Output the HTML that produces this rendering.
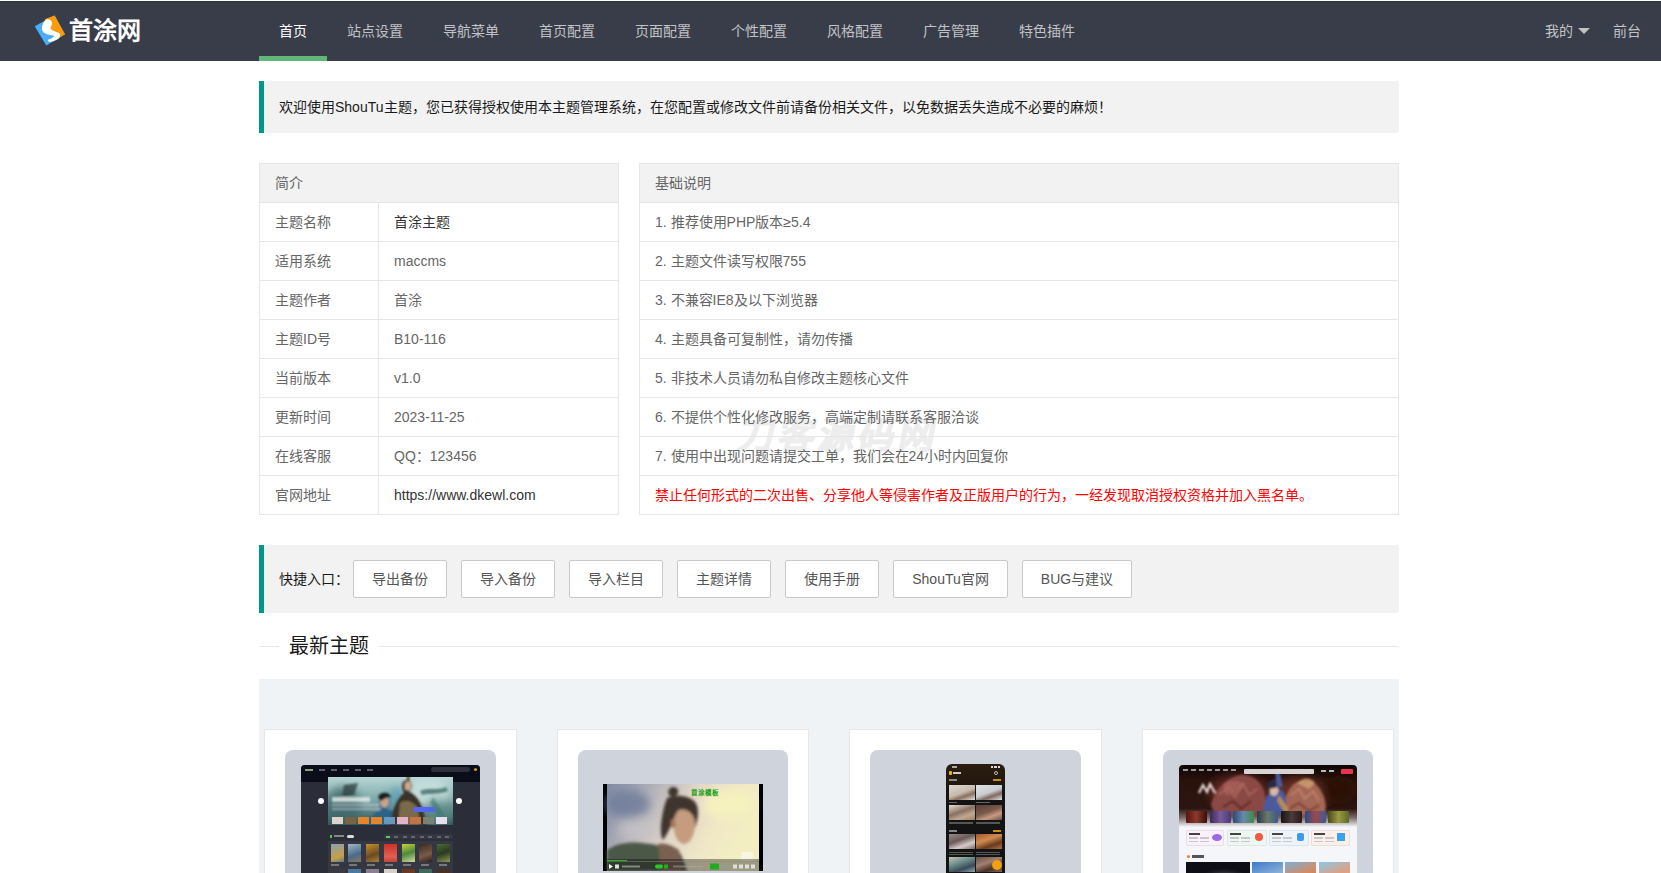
<!DOCTYPE html>
<html lang="zh-CN"><head><meta charset="utf-8">
<style>
*{box-sizing:border-box;margin:0;padding:0}
html,body{width:1661px;height:873px;overflow:hidden;background:#fff}
body{font-family:"Liberation Sans",sans-serif;font-size:14px;color:#000;position:relative}
.abs{position:absolute}
.header{position:absolute;left:0;top:1px;width:1661px;height:60px;background:#393D49;box-shadow:inset 0 1px 0 #2e313c}
.logo-t{position:absolute;left:69px;top:14px;font-family:"Liberation Serif",serif;font-weight:bold;font-size:24px;color:#fff;line-height:32px;letter-spacing:0}
.nav{position:absolute;top:0;left:259px;height:60px;white-space:nowrap}
.nav a{float:left;display:block;padding:0 20px;line-height:60px;color:rgba(255,255,255,.7);text-decoration:none;position:relative;font-size:14px}
.nav a.this{color:#fff}
.nav a.this:after{content:"";position:absolute;left:0;right:0;bottom:0;height:5px;background:#5FB878}
.rnav{position:absolute;top:0;line-height:60px;color:rgba(255,255,255,.7)}
.quote{position:absolute;left:259px;width:1140px;background:#f2f2f2;border-left:5px solid #009688;border-radius:0 2px 2px 0;padding:15px;line-height:22px;color:#1a1a1a}
table{position:absolute;border-collapse:collapse;border-spacing:0;color:#666;background:transparent}
td,th{border:1px solid #e6e6e6;padding:9px 15px;line-height:20px;height:39px;font-weight:normal;text-align:left;font-size:14px}
th{background:#f2f2f2}
.btn{display:inline-block;height:38px;line-height:36px;padding:0 18px;border:1px solid #C9C9C9;background:#fff;color:#555;border-radius:2px;font-size:14px;vertical-align:top;margin-left:10px}
.field{position:absolute;left:259px;top:646px;width:1140px;height:20px;border:1px solid #e6e6e6;border-width:1px 0 0;border-radius:2px}
.legend{position:absolute;left:20px;top:-15px;padding:0 10px;background:#fff;font-size:20px;font-weight:300;line-height:28px;color:#1a1a1a}
.gbox{position:absolute;left:259px;top:679px;width:1140px;height:200px;background:#f0f3f6}
.card{position:absolute;top:50px;width:253px;height:200px;background:#fff;border:1px solid #e6e6e6}
.ibox{position:absolute;left:20px;top:20px;width:211px;height:200px;background:#cfd4dc;border-radius:8px;overflow:hidden}
</style></head><body>
<div class="header">
  <svg class="abs" style="left:34px;top:14px" width="34" height="33" viewBox="0 0 34 33">
    <polygon points="20.6,0.4 31,19.2 12.3,30.4 0.7,11.3" fill="#4aadf5"/>
    <polygon points="20.6,0.4 31,19.2 21.5,24.9 22,21 17,14 13,5 10,4.5" fill="#ff9a0a"/>
    <path d="M12,4.5 C15,3.8 18,5 18,8 C18,10.5 16.5,12 16.5,13.5 C17.5,15.5 22,16.5 25,18 C26.5,19 26.5,22 24,24 C22,25.5 18,26.8 15,27 C14,26 14,25 14.5,24.5 C16.5,23.8 19,23 20.5,21 C19,20.3 16,20 13,19.2 C10,18.2 8,16.5 8,14 C7.8,11 9,7 12,4.5 Z" fill="#fff"/>
  </svg>
  <div class="logo-t">首涂网</div>
  <div class="nav">
    <a class="this">首页</a><a>站点设置</a><a>导航菜单</a><a>首页配置</a><a>页面配置</a><a>个性配置</a><a>风格配置</a><a>广告管理</a><a>特色插件</a>
  </div>
  <div class="rnav" style="left:1545px">我的</div>
  <svg class="abs" style="left:1578px;top:27px" width="12" height="7" viewBox="0 0 12 7"><polygon points="0,0 12,0 6,6" fill="#c2c2c2"/></svg>
  <div class="rnav" style="left:1613px">前台</div>
</div>

<div class="quote" style="top:81px;height:52px">欢迎使用ShouTu主题，您已获得授权使用本主题管理系统，在您配置或修改文件前请备份相关文件，以免数据丢失造成不必要的麻烦！</div>

<div class="abs" style="left:739px;top:414px;font-size:36px;line-height:44px;font-weight:900;color:#ededed;-webkit-text-stroke:1.2px #ededed;letter-spacing:4px;white-space:nowrap;transform:skewX(-11deg)">刀客源码网</div>
<table style="left:259px;top:163px;width:360px">
<tr><th colspan="2">简介</th></tr>
<tr><td style="width:119px">主题名称</td><td style="color:#333">首涂主题</td></tr>
<tr><td>适用系统</td><td>maccms</td></tr>
<tr><td>主题作者</td><td>首涂</td></tr>
<tr><td>主题ID号</td><td>B10-116</td></tr>
<tr><td>当前版本</td><td>v1.0</td></tr>
<tr><td>更新时间</td><td>2023-11-25</td></tr>
<tr><td>在线客服</td><td>QQ：123456</td></tr>
<tr><td>官网地址</td><td style="color:#333">https://www.dkewl.com</td></tr>
</table>

<table style="left:639px;top:163px;width:760px">
<tr><th>基础说明</th></tr>
<tr><td>1. 推荐使用PHP版本≥5.4</td></tr>
<tr><td>2. 主题文件读写权限755</td></tr>
<tr><td>3. 不兼容IE8及以下浏览器</td></tr>
<tr><td>4. 主题具备可复制性，请勿传播</td></tr>
<tr><td>5. 非技术人员请勿私自修改主题核心文件</td></tr>
<tr><td>6. 不提供个性化修改服务，高端定制请联系客服洽谈</td></tr>
<tr><td>7. 使用中出现问题请提交工单，我们会在24小时内回复你</td></tr>
<tr><td style="color:#f00">禁止任何形式的二次出售、分享他人等侵害作者及正版用户的行为，一经发现取消授权资格并加入黑名单。</td></tr>
</table>

<div class="quote" style="top:545px;height:68px;line-height:38px">快捷入口：<a class="btn" style="position:absolute;left:89px;top:15px;width:94px;padding:0;text-align:center;margin:0">导出备份</a><a class="btn" style="position:absolute;left:197px;top:15px;width:94px;padding:0;text-align:center;margin:0">导入备份</a><a class="btn" style="position:absolute;left:305px;top:15px;width:94px;padding:0;text-align:center;margin:0">导入栏目</a><a class="btn" style="position:absolute;left:413px;top:15px;width:94px;padding:0;text-align:center;margin:0">主题详情</a><a class="btn" style="position:absolute;left:521px;top:15px;width:94px;padding:0;text-align:center;margin:0">使用手册</a><a class="btn" style="position:absolute;left:629px;top:15px;width:115px;padding:0;text-align:center;margin:0">ShouTu官网</a><a class="btn" style="position:absolute;left:758px;top:15px;width:110px;padding:0;text-align:center;margin:0">BUG与建议</a></div>

<div class="field"><div class="legend">最新主题</div></div>

<div class="gbox">
  <div class="card" style="left:5px"><div class="ibox"></div></div>
  <div class="card" style="left:298px;width:252px"><div class="ibox" style="width:210px"></div></div>
  <div class="card" style="left:590px"><div class="ibox"></div></div>
  <div class="card" style="left:883px;width:252px"><div class="ibox" style="width:210px"></div></div>
</div>

<!-- thumb 1: dark desktop -->
<div class="abs" style="left:301px;top:765px;width:179px;height:120px;background:#2b2e39;border-radius:4px 4px 0 0;overflow:hidden">
  <div class="abs" style="left:0;top:0;width:179px;height:17px;background:#0b0d1b"></div>
  <div class="abs" style="left:4px;top:4px;width:8px;height:2px;background:#8fa080"></div>
  <div class="abs" style="left:18px;top:4px;width:60px;height:2px;background:repeating-linear-gradient(90deg,#5a5e6a 0 6px,transparent 6px 12px)"></div>
  <div class="abs" style="left:130px;top:2px;width:39px;height:5px;background:#2d303b;border-radius:3px"></div>
  <div class="abs" style="left:173px;top:3px;width:3px;height:3px;background:#c9a020;border-radius:50%"></div>
  <svg class="abs" style="left:27px;top:12px" width="125" height="48" viewBox="0 0 125 48">
    <defs>
      <filter id="bb1" x="-20%" y="-20%" width="140%" height="140%"><feGaussianBlur stdDeviation="1.2"/></filter>
      <filter id="bb2" x="-30%" y="-30%" width="160%" height="160%"><feGaussianBlur stdDeviation="4"/></filter>
      <linearGradient id="bg1" x1="0" y1="0" x2="0" y2="1"><stop offset="0" stop-color="#b9d6d6"/><stop offset=".5" stop-color="#7aa6a6"/><stop offset="1" stop-color="#2f5458"/></linearGradient>
    </defs>
    <rect width="125" height="48" fill="url(#bg1)"/>
    <g filter="url(#bb2)">
      <ellipse cx="15" cy="30" rx="18" ry="20" fill="#3d6668" opacity=".8"/>
      <ellipse cx="100" cy="15" rx="22" ry="14" fill="#c6e0de" opacity=".9"/>
      <ellipse cx="110" cy="35" rx="14" ry="14" fill="#5d8e8a" opacity=".7"/>
      <ellipse cx="70" cy="22" rx="12" ry="12" fill="#4f9ab8" opacity=".6"/>
    </g>
    <g filter="url(#bb1)">
      <path d="M16,8 L30,6 L26,18 L14,20 Z" fill="#2b3e3e" opacity=".75"/>
      <rect x="4" y="20" width="38" height="5" fill="#e8eeee" opacity=".8"/>
      <rect x="4" y="27" width="52" height="2" fill="#dde" opacity=".55"/>
      <rect x="4" y="31" width="48" height="2" fill="#dde" opacity=".5"/>
      <g transform="translate(0,7)"><path d="M52,14 C56,10 62,12 62,18 C62,22 60,24 58,25 C70,27 78,36 80,48 L34,48 C38,36 46,28 54,26 C51,23 50,18 52,14 Z" fill="#2a6488"/>
      <ellipse cx="56.5" cy="18" rx="4.5" ry="5.5" fill="#c8a48c"/>
      <path d="M50,13 C53,7 61,8 63,13 L58,14 L53,17 Z" fill="#1a1a1a"/></g>
      <path d="M76,4 C80,2 84,5 84,9 C84,12 82,14 81,15 C90,18 96,30 98,48 L62,48 C64,32 70,20 76,16 C74,12 73,7 76,4 Z" fill="#3a3228"/>
      <path d="M72,26 C78,22 86,24 90,32 L92,48 L70,48 Z" fill="#7a6a48"/>
      <ellipse cx="80" cy="9" rx="3.5" ry="4.5" fill="#caa88e"/>
      <rect x="79" y="-2" width="2.5" height="6" fill="#5a4020"/>
      <path d="M92,14 C100,10 110,14 118,10 L120,14 C110,18 100,16 94,18 Z" fill="#2d5a58" opacity=".7"/>
      <path d="M105,20 L118,40 L112,44 L102,26 Z" fill="#3a7070" opacity=".55"/>
    </g>
  </svg>
  <div class="abs" style="left:31px;top:52px;width:11px;height:7px;background:#ddd5cc"></div><div class="abs" style="left:44px;top:52px;width:11px;height:7px;background:#7a6244"></div><div class="abs" style="left:57px;top:52px;width:11px;height:7px;background:#e4852c"></div><div class="abs" style="left:70px;top:52px;width:11px;height:7px;background:#e4852c"></div><div class="abs" style="left:83px;top:52px;width:11px;height:7px;background:#6a98bc"></div><div class="abs" style="left:96px;top:52px;width:11px;height:7px;background:#e2b4cc"></div><div class="abs" style="left:109px;top:52px;width:11px;height:7px;background:#c27446"></div><div class="abs" style="left:122px;top:52px;width:11px;height:7px;background:#7c8270"></div><div class="abs" style="left:135px;top:52px;width:11px;height:7px;background:#e6dff0"></div>
  <div class="abs" style="left:112px;top:42px;width:22px;height:5px;background:#5566ee;border-radius:3px"></div>
  <div class="abs" style="left:17px;top:33px;width:6px;height:6px;background:#fff;border-radius:50%"></div>
  <div class="abs" style="left:155px;top:33px;width:6px;height:6px;background:#fff;border-radius:50%"></div>
  <div class="abs" style="left:29px;top:70px;width:2px;height:3px;background:#4c4"></div>
  <div class="abs" style="left:33px;top:70px;width:10px;height:2px;background:#888"></div>
  <div class="abs" style="left:46px;top:70px;width:7px;height:3px;background:#ddd;border-radius:2px"></div>
  <div class="abs" style="left:83px;top:69px;width:69px;height:5px;background:#343743;border-radius:2px"></div><div class="abs" style="left:85px;top:71px;width:4px;height:1.5px;background:#5c5"></div><div class="abs" style="left:93px;top:71px;width:57px;height:1.5px;background:repeating-linear-gradient(90deg,#666 0 4px,transparent 4px 8.5px)"></div><div class="abs" style="left:27px;top:76px;width:125px;height:50px;background:#353843"></div>
  <div class="abs" style="left:30px;top:79px;width:13px;height:18px;background:linear-gradient(160deg,#8aa0b8,#c8a040 70%,#5a7a9a)"></div>
  <div class="abs" style="left:47px;top:79px;width:13px;height:18px;background:linear-gradient(160deg,#a0b8c8,#4a6a8a 60%,#8a7a5a)"></div>
  <div class="abs" style="left:65px;top:79px;width:13px;height:18px;background:linear-gradient(160deg,#c89030,#6a4a20 60%,#b08040)"></div>
  <div class="abs" style="left:83px;top:79px;width:13px;height:18px;background:linear-gradient(180deg,#d03028,#e06050 70%,#c84030)"></div>
  <div class="abs" style="left:101px;top:79px;width:13px;height:18px;background:linear-gradient(160deg,#d0d040,#4a8a3a 50%,#d8d8a0)"></div>
  <div class="abs" style="left:118px;top:79px;width:13px;height:18px;background:linear-gradient(160deg,#3a2a20,#7a5a48 60%,#2a2018)"></div>
  <div class="abs" style="left:136px;top:79px;width:13px;height:18px;background:linear-gradient(160deg,#4a6a3a,#2a3a20 50%,#8a9a50)"></div>
  <div class="abs" style="left:30px;top:99px;width:120px;height:2px;background:repeating-linear-gradient(90deg,#777 0 8px,transparent 8px 18px)"></div>
  <div class="abs" style="left:30px;top:104px;width:13px;height:12px;background:#3a3a40"></div><div class="abs" style="left:47px;top:104px;width:13px;height:12px;background:#4a7aa0"></div><div class="abs" style="left:65px;top:104px;width:13px;height:12px;background:#8a8090"></div><div class="abs" style="left:83px;top:104px;width:13px;height:12px;background:#d8d0c8"></div><div class="abs" style="left:101px;top:104px;width:13px;height:12px;background:#6a3a20"></div><div class="abs" style="left:118px;top:104px;width:13px;height:12px;background:#3a6a5a"></div><div class="abs" style="left:136px;top:104px;width:13px;height:12px;background:#4a3020"></div>
</div>

<!-- thumb 2: video -->
<svg class="abs" style="left:603px;top:784px" width="160" height="87" viewBox="0 0 160 87">
  <defs>
    <filter id="bl1" x="-20%" y="-20%" width="140%" height="140%"><feGaussianBlur stdDeviation="1.6"/></filter>
    <filter id="bl2" x="-30%" y="-30%" width="160%" height="160%"><feGaussianBlur stdDeviation="5"/></filter>
    <linearGradient id="sky" x1="0" y1="0" x2="1" y2="0.3">
      <stop offset="0" stop-color="#7f8aa3"/><stop offset="0.3" stop-color="#b4b3bb"/><stop offset="0.55" stop-color="#e2d6c8"/><stop offset="0.8" stop-color="#f1e8c6"/><stop offset="1" stop-color="#f2eec2"/>
    </linearGradient>
  </defs>
  <rect width="160" height="87" fill="#000"/>
  <rect x="4" y="0" width="152" height="87" fill="url(#sky)"/>
  <g filter="url(#bl2)">
    <ellipse cx="25" cy="20" rx="22" ry="14" fill="#6d7a98" opacity=".8"/>
    <ellipse cx="35" cy="45" rx="20" ry="10" fill="#c8c4c8" opacity=".7"/>
    <ellipse cx="125" cy="20" rx="25" ry="15" fill="#f6f2bc" opacity=".9"/>
  </g>
  <g filter="url(#bl1)">
    <path d="M4,66 C15,58 30,57 48,60 C60,62 70,66 78,70 L84,87 L4,87 Z" fill="#4b5946"/>
    <path d="M55,60 C62,58 70,62 76,66 L80,87 L58,87 Z" fill="#7a6050"/>
    <path d="M70,3 C66,3 64,8 66,11 C68,13 74,13 75,9 C76,5 73,3 70,3 Z" fill="#3e342c"/>
    <path d="M64,14 C72,10 86,11 92,18 C97,24 95,36 92,44 L86,40 C84,32 80,28 74,30 C70,36 66,48 60,56 C56,50 58,30 64,14 Z" fill="#3f352e"/>
    <path d="M76,26 C84,24 92,30 92,40 C92,50 88,58 82,60 C76,60 72,54 71,46 C70,38 71,30 76,26 Z" fill="#c59c7e"/>
    <path d="M68,36 C70,34 73,36 73,40 C73,44 70,45 68,43 Z" fill="#a57a5e"/>
  </g>
  <text x="88" y="11" font-size="6.5" font-weight="bold" fill="#12a012" font-family="Liberation Sans">首涂模板</text>
  <rect x="138" y="68" width="12" height="9" rx="2" fill="#fff" opacity=".45"/>
  <rect x="4" y="75" width="152" height="12" fill="#000" opacity=".35"/>
  <rect x="4" y="76" width="20" height="1" fill="#2b2"/>
  <rect x="4" y="77" width="152" height="0.8" fill="#888" opacity=".6"/>
  <polygon points="6,80 10,82.5 6,85" fill="#fff"/>
  <rect x="12" y="80.5" width="4" height="4" fill="#ddd"/>
  <rect x="19" y="81.5" width="18" height="2" fill="#aaa" opacity=".7"/>
  <rect x="52" y="80.5" width="8" height="4" rx="2" fill="#2c2"/>
  <rect x="61" y="80.5" width="4" height="4" fill="#2a2"/>
  <rect x="70" y="81.5" width="30" height="2" fill="#aaa" opacity=".5"/>
  <rect x="107" y="79.5" width="9" height="6" fill="#2a2"/>
  <rect x="117" y="80.5" width="8" height="4" fill="#999" opacity=".6"/>
  <rect x="129" y="80.5" width="23" height="4" fill="url(#ctl)"/>
  <g fill="#ddd"><rect x="130" y="80.5" width="4" height="4"/><rect x="136" y="80.5" width="4" height="4"/><rect x="142" y="80.5" width="4" height="4"/><rect x="148" y="80.5" width="4" height="4"/></g>
</svg>

<!-- thumb 3: phone -->
<div class="abs" style="left:946px;top:764px;width:59px;height:120px;background:linear-gradient(180deg,#2a1c10 0,#24180e 18px,#141414 28px,#131313 100%);border-radius:6px 6px 0 0;overflow:hidden">
  <div class="abs" style="left:3px;top:7px;width:3px;height:4px;background:#f0b020;border-radius:1px"></div>
  <div class="abs" style="left:7px;top:8px;width:8px;height:2px;background:#ccc"></div>
  <div class="abs" style="left:48px;top:7px;width:4px;height:4px;border:1px solid #bbb;border-radius:50%"></div>
  <div class="abs" style="left:45px;top:2px;width:10px;height:2px;background:repeating-linear-gradient(90deg,#ddd 0 2.5px,transparent 2.5px 3.5px)"></div>
  <div class="abs" style="left:3px;top:15px;width:8px;height:2px;background:#888"></div>
  <div class="abs" style="left:47px;top:15px;width:8px;height:2px;background:#c8900e"></div>
  <div class="abs" style="left:3px;top:21px;width:26px;height:15px;background:linear-gradient(160deg,#e0d6cc,#c8bcb0 50%,#8a7060 70%,#e8e4e0)"></div>
  <div class="abs" style="left:30px;top:21px;width:26px;height:15px;background:linear-gradient(160deg,#dfe3e6,#c8cdd2 50%,#806a60 70%,#e0e4e8)"></div>
  <div class="abs" style="left:3px;top:41px;width:26px;height:15px;background:linear-gradient(160deg,#e8e0d4,#8a7060 45%,#c0a890 70%,#a08060)"></div>
  <div class="abs" style="left:30px;top:41px;width:26px;height:15px;background:linear-gradient(160deg,#5a4038,#7a5a4a 45%,#c89a80 70%,#6a5048)"></div>
  <div class="abs" style="left:3px;top:37.5px;width:8px;height:1.5px;background:#666"></div><div class="abs" style="left:30px;top:37.5px;width:14px;height:1.5px;background:#666"></div><div class="abs" style="left:6px;top:2px;width:5px;height:1.5px;background:#aaa"></div><div class="abs" style="left:3px;top:58px;width:24px;height:2px;background:#555"></div>
  <div class="abs" style="left:30px;top:58px;width:24px;height:2px;background:#555"></div>
  <div class="abs" style="left:3px;top:66px;width:8px;height:2px;background:#888"></div>
  <div class="abs" style="left:47px;top:66px;width:8px;height:2px;background:#c8900e"></div>
  <div class="abs" style="left:3px;top:70px;width:26px;height:15px;background:linear-gradient(160deg,#9a8a88,#6a5a58 40%,#d8ccc8 70%,#7a6a68)"></div>
  <div class="abs" style="left:30px;top:70px;width:26px;height:15px;background:linear-gradient(160deg,#a05a30,#d08a50 40%,#6a3a20 70%,#b07040)"></div>
  <div class="abs" style="left:3px;top:88px;width:24px;height:4px;background:repeating-linear-gradient(180deg,#555 0 1px,transparent 1px 2px)"></div>
  <div class="abs" style="left:30px;top:88px;width:24px;height:4px;background:repeating-linear-gradient(180deg,#555 0 1px,transparent 1px 2px)"></div>
  <div class="abs" style="left:3px;top:93px;width:26px;height:15px;background:linear-gradient(160deg,#c0c8b8,#6a8a88 40%,#3a4a5a 70%,#8ab0b0)"></div>
  <div class="abs" style="left:30px;top:93px;width:26px;height:15px;background:linear-gradient(160deg,#6a5048,#a08070 40%,#4a3028 70%,#8a6a58)"></div>
  <div class="abs" style="left:46px;top:96px;width:10px;height:10px;background:#f0a010;border-radius:50%"></div>
</div>

<!-- thumb 4: light desktop -->
<div class="abs" style="left:1179px;top:765px;width:178px;height:120px;background:#f5f6f9;border-radius:4px 4px 0 0;overflow:hidden">
  <svg class="abs" style="left:0;top:0" width="178" height="62" viewBox="0 0 178 62">
    <defs>
      <filter id="cb1" x="-20%" y="-20%" width="140%" height="140%"><feGaussianBlur stdDeviation="1.3"/></filter>
      <filter id="cb2" x="-30%" y="-30%" width="160%" height="160%"><feGaussianBlur stdDeviation="5"/></filter>
      <linearGradient id="cbg" x1="0" y1="0" x2="0" y2="1"><stop offset="0" stop-color="#0c0605"/><stop offset=".25" stop-color="#2a120c"/><stop offset=".7" stop-color="#2c1510"/><stop offset=".85" stop-color="#7a6a66"/><stop offset="1" stop-color="#f5f6f9"/></linearGradient>
    </defs>
    <rect width="178" height="62" fill="url(#cbg)"/>
    <g filter="url(#cb2)">
      <ellipse cx="60" cy="28" rx="30" ry="18" fill="#6a2c24" opacity=".8"/>
      <ellipse cx="120" cy="30" rx="28" ry="18" fill="#6e3424" opacity=".8"/>
      <ellipse cx="160" cy="25" rx="18" ry="14" fill="#2a0e08" opacity=".8"/>
    </g>
    <g filter="url(#cb1)">
      <path d="M32,40 C36,24 48,12 62,10 C74,9 84,18 86,30 C88,40 84,48 80,50 L36,50 Z" fill="#8a4a44"/>
      <path d="M44,20 C50,14 60,14 66,20 C62,26 54,30 46,30 Z" fill="#a8605a" opacity=".8"/>
      <path d="M112,22 C120,12 136,14 142,26 C148,36 148,46 144,50 L104,50 C104,40 106,30 112,22 Z" fill="#a46654"/>
      <path d="M118,18 C124,12 132,12 136,18 L130,24 Z" fill="#d0a070" opacity=".8"/>
      <path d="M84,50 C84,38 88,28 94,24 C98,22 104,24 106,30 C108,38 108,46 106,50 Z" fill="#4c5a9c"/>
      <ellipse cx="95" cy="25" rx="4.5" ry="6" fill="#d8b8aa"/>
      <path d="M88,20 C90,14 98,12 102,18 L100,22 L90,24 Z" fill="#2a2a44"/>
      <path d="M96,6 L100,4 L104,22 L98,22 Z" fill="#4c5a9c"/>
      <path d="M100,30 L110,44 L106,48 L98,36 Z" fill="#e0a040" opacity=".7"/>
      <path d="M40,30 L50,22 L56,32 L64,18 L70,30 L78,24" stroke="#b06a5e" stroke-width="2" fill="none" opacity=".7"/>
      <path d="M44,42 L54,36 L62,44 L72,36" stroke="#5a2420" stroke-width="2.5" fill="none" opacity=".7"/>
      <path d="M112,30 L120,24 L126,34 L134,26 L140,36" stroke="#c88a70" stroke-width="2" fill="none" opacity=".7"/>
      <path d="M110,44 L120,38 L130,46 L140,40" stroke="#6a3424" stroke-width="2.5" fill="none" opacity=".6"/>
      <path d="M20,28 L24,20 L28,27 L31,19 L36,28" stroke="#e8dcdc" stroke-width="2.2" fill="none"/>
    </g>
  </svg>
  <div class="abs" style="left:4px;top:4px;width:56px;height:2px;background:repeating-linear-gradient(90deg,#999 0 5px,transparent 5px 8px)"></div>
  <div class="abs" style="left:65px;top:4px;width:70px;height:5px;background:#d6d3d2;border-radius:1px"></div>
  <div class="abs" style="left:142px;top:5px;width:16px;height:2px;background:repeating-linear-gradient(90deg,#bbb 0 5px,transparent 5px 8px)"></div>
  <div class="abs" style="left:162px;top:4px;width:12px;height:5px;background:#e6364c;border-radius:1px"></div>
  <div class="abs" style="left:7.0px;top:46px;width:21px;height:12px;background:linear-gradient(90deg,#5a1410,#8a3a2a 50%,#3a0c0a);border-radius:1px"></div><div class="abs" style="left:30.7px;top:46px;width:21px;height:12px;background:linear-gradient(90deg,#3a2a5a,#7a5a9a 50%,#4a3a7a);border-radius:1px"></div><div class="abs" style="left:54.4px;top:46px;width:21px;height:12px;background:linear-gradient(90deg,#2a4a7a,#6a8aaa 50%,#3a8a4a);border-radius:1px"></div><div class="abs" style="left:78.1px;top:46px;width:21px;height:12px;background:linear-gradient(90deg,#2a3a4a,#6a7a6a 50%,#3a5a8a);border-radius:1px"></div><div class="abs" style="left:101.8px;top:46px;width:21px;height:12px;background:linear-gradient(90deg,#1a1414,#4a3a3a 50%,#2a1a1a);border-radius:1px"></div><div class="abs" style="left:125.5px;top:46px;width:21px;height:12px;background:linear-gradient(90deg,#2a4a8a,#9a4a4a 50%,#3a5a9a);border-radius:1px"></div><div class="abs" style="left:149.2px;top:46px;width:21px;height:12px;background:linear-gradient(90deg,#4a4a1a,#9a9a40 50%,#5a6a2a);border-radius:1px"></div>
  <div class="abs" style="left:7px;top:65px;width:38px;height:16px;background:#fbf0fb;border:1px solid #e8dde8;border-radius:1px"></div>
  <div class="abs" style="left:48px;top:65px;width:40px;height:16px;background:#eef7f1;border:1px solid #dde8e0;border-radius:1px"></div>
  <div class="abs" style="left:90px;top:65px;width:40px;height:16px;background:#eef3fb;border:1px solid #dde3ee;border-radius:1px"></div>
  <div class="abs" style="left:132px;top:65px;width:39px;height:16px;background:#fcefec;border:1px solid #eedcd8;border-radius:1px"></div>
  <div class="abs" style="left:10px;top:68px;width:11px;height:2px;background:#444"></div><div class="abs" style="left:10px;top:72px;width:20px;height:1.5px;background:repeating-linear-gradient(90deg,#c8c8c8 0 9px,transparent 9px 11px)"></div><div class="abs" style="left:10px;top:75.5px;width:20px;height:1.5px;background:repeating-linear-gradient(90deg,#c8c8c8 0 9px,transparent 9px 11px)"></div><div class="abs" style="left:51px;top:68px;width:11px;height:2px;background:#444"></div><div class="abs" style="left:51px;top:72px;width:20px;height:1.5px;background:repeating-linear-gradient(90deg,#c8c8c8 0 9px,transparent 9px 11px)"></div><div class="abs" style="left:51px;top:75.5px;width:20px;height:1.5px;background:repeating-linear-gradient(90deg,#c8c8c8 0 9px,transparent 9px 11px)"></div><div class="abs" style="left:93px;top:68px;width:11px;height:2px;background:#444"></div><div class="abs" style="left:93px;top:72px;width:20px;height:1.5px;background:repeating-linear-gradient(90deg,#c8c8c8 0 9px,transparent 9px 11px)"></div><div class="abs" style="left:93px;top:75.5px;width:20px;height:1.5px;background:repeating-linear-gradient(90deg,#c8c8c8 0 9px,transparent 9px 11px)"></div><div class="abs" style="left:135px;top:68px;width:11px;height:2px;background:#444"></div><div class="abs" style="left:135px;top:72px;width:20px;height:1.5px;background:repeating-linear-gradient(90deg,#c8c8c8 0 9px,transparent 9px 11px)"></div><div class="abs" style="left:135px;top:75.5px;width:20px;height:1.5px;background:repeating-linear-gradient(90deg,#c8c8c8 0 9px,transparent 9px 11px)"></div><div class="abs" style="left:33px;top:69px;width:10px;height:7px;background:#9a6ae8;border-radius:50%"></div>
  <div class="abs" style="left:76px;top:68px;width:8px;height:8px;background:#f05a40;border-radius:50%"></div>
  <div class="abs" style="left:118px;top:68px;width:7px;height:8px;background:#3a9aee;border-radius:2px"></div>
  <div class="abs" style="left:158px;top:68px;width:8px;height:8px;background:#3aa0f0"></div>
  <div class="abs" style="left:8px;top:90px;width:3px;height:3px;background:#f08030;border-radius:50%"></div>
  <div class="abs" style="left:13px;top:90px;width:12px;height:3px;background:#555"></div>
  <div class="abs" style="left:7px;top:97px;width:64px;height:30px;background:radial-gradient(ellipse closest-side at 60% 60%,#6a6a70,#1a1a22 80%,#0e0e16)"></div>
  <div class="abs" style="left:73px;top:97px;width:31px;height:30px;background:linear-gradient(160deg,#3a7ac8,#8ab0d8 50%,#3a70b8)"></div>
  <div class="abs" style="left:106px;top:97px;width:31px;height:30px;background:linear-gradient(160deg,#7ab0d8,#d88a60 45%,#4a7ab0)"></div>
  <div class="abs" style="left:140px;top:97px;width:31px;height:30px;background:linear-gradient(160deg,#8ac8e8,#e0a080 45%,#a8d0f0)"></div>
</div>
</body></html>
